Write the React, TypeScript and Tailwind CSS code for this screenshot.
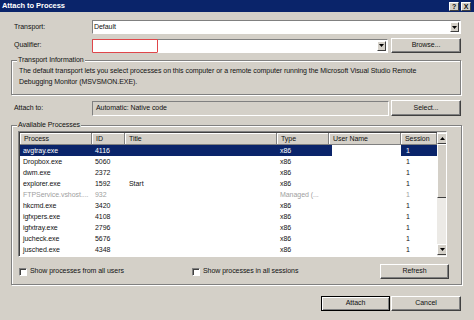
import React from 'react';

const FONT = "font-['Liberation_Sans',Arial,sans-serif]";

type Row = {
  name: string;
  id: string;
  title?: string;
  type: string;
  session: string;
  dim?: boolean;
  selected?: boolean;
};

const ROWS: Row[] = [
  { name: 'avgtray.exe', id: '4116', type: 'x86', session: '1', selected: true },
  { name: 'Dropbox.exe', id: '5060', type: 'x86', session: '1' },
  { name: 'dwm.exe', id: '2372', type: 'x86', session: '1' },
  { name: 'explorer.exe', id: '1592', title: 'Start', type: 'x86', session: '1' },
  { name: 'FTPService.vshost....', id: '932', type: 'Managed (...', session: '1', dim: true },
  { name: 'hkcmd.exe', id: '3420', type: 'x86', session: '1' },
  { name: 'igfxpers.exe', id: '4108', type: 'x86', session: '1' },
  { name: 'igfxtray.exe', id: '2796', type: 'x86', session: '1' },
  { name: 'jucheck.exe', id: '5676', type: 'x86', session: '1' },
  { name: 'jusched.exe', id: '4348', type: 'x86', session: '1' },
  { name: 'lsass.exe', id: '2072', type: 'x86', session: '1' },
];

function DropArrow() {
  return (
    <div className="w-[9px] h-[10px] mr-[1px] bg-[#d4d0c8] border border-t-white border-l-white border-r-[#404040] border-b-[#404040] flex items-center justify-center">
      <svg width="5" height="3" viewBox="0 0 5 3">
        <path d="M0 0h5L2.5 3z" fill="#000" />
      </svg>
    </div>
  );
}

function Btn({ label, w, h = 'h-[15px]', isDefault }: { label: string; w: string; h?: string; isDefault?: boolean }) {
  return (
    <div
      className={`${w} ${h} shrink-0 flex items-center justify-center bg-[#d4d0c8] border ${
        isDefault
          ? 'border-black shadow-[inset_1px_1px_0_#fff,inset_-1px_-1px_0_#808080]'
          : 'border-t-white border-l-white border-r-[#404040] border-b-[#404040] shadow-[inset_-1px_-1px_0_#808080]'
      }`}
    >
      {label}
    </div>
  );
}

function Group({ label, className, children }: { label: string; className: string; children: React.ReactNode }) {
  return (
    <div className={`relative border border-[#808080] shadow-[inset_1px_1px_0_#fff,1px_1px_0_#fff] ${className}`}>
      <span className="absolute -top-[6px] left-[5px] px-[1px] bg-[#d4d0c8] leading-[10px]">{label}</span>
      {children}
    </div>
  );
}

function Checkbox({ label }: { label: string }) {
  return (
    <div className="flex items-center gap-[3px]">
      <div className="w-[8px] h-[8px] bg-white border border-t-[#808080] border-l-[#808080] border-r-white border-b-white shadow-[inset_1px_1px_0_#404040]" />
      <span>{label}</span>
    </div>
  );
}

const COLS = ['w-[72px]', 'w-[33px]', 'w-[152px]', 'w-[52px]', 'w-[72px]', 'w-[36px]'];
const HEADS = ['Process', 'ID', 'Title', 'Type', 'User Name', 'Session'];

export default function App() {
  return (
    <div className={`w-[474px] h-[320px] overflow-hidden bg-[#d4d0c8] text-[#111] text-[7px] tracking-[-0.05px] ${FONT} flex flex-col`}>
      {/* title bar */}
      <div className="h-[12px] shrink-0 bg-[#0a246a] flex items-center justify-between pl-[2px] pr-[3px]">
        <span className="text-white font-bold text-[7.5px] leading-[12px]">Attach to Process</span>
        <div className="flex gap-[2px]">
          <div className="w-[10px] h-[9px] bg-[#d4d0c8] border border-t-white border-l-white border-r-[#404040] border-b-[#404040] flex items-center justify-center font-bold text-[7px] leading-none">?</div>
          <div className="w-[10px] h-[9px] bg-[#d4d0c8] border border-t-white border-l-white border-r-[#404040] border-b-[#404040] flex items-center justify-center font-bold text-[7px] leading-none">X</div>
        </div>
      </div>

      <div className="flex flex-col pl-[11px] pr-[12px] pt-[8px]">
        {/* Transport */}
        <div className="h-[14px] flex items-center">
          <span className="w-[81px] pl-[3px] shrink-0">Transport:</span>
          <div className="flex-1 mr-[1px] h-[14px] bg-white border border-t-[#808080] border-l-[#808080] border-r-white border-b-white flex items-center justify-between pl-[1px]">
            <span>Default</span>
            <DropArrow />
          </div>
        </div>

        {/* Qualifier */}
        <div className="h-[15px] mt-[4px] flex items-center">
          <span className="w-[81px] pl-[3px] shrink-0">Qualifier:</span>
          <div className="relative w-[296px] h-[14px] bg-white border border-t-[#808080] border-l-[#808080] border-r-white border-b-white flex items-center justify-end">
            <div className="absolute -left-[1px] -top-[1px] w-[66px] h-[14px] border border-[#e0464a] rounded-[1px]" />
            <DropArrow />
          </div>
          <div className="ml-[3px]">
            <Btn label="Browse..." w="w-[70px]" />
          </div>
        </div>

        {/* Transport information */}
        <Group label="Transport Information" className="mt-[7px] mr-[1px] h-[35px] pl-[7px] pt-[4px] leading-[11px]">
          <p>The default transport lets you select processes on this computer or a remote computer running the Microsoft Visual Studio Remote</p>
          <p>Debugging Monitor (MSVSMON.EXE).</p>
        </Group>

        {/* Attach to */}
        <div className="h-[16px] mt-[5px] flex items-center">
          <span className="w-[81px] pl-[3px] shrink-0">Attach to:</span>
          <div className="w-[297px] h-[15px] border border-t-[#808080] border-l-[#808080] border-r-white border-b-white flex items-center pl-[3px]">
            Automatic: Native code
          </div>
          <div className="ml-[2px]">
            <Btn label="Select..." w="w-[70px]" h="h-[16px]" />
          </div>
        </div>

        {/* Available processes */}
        <Group label="Available Processes" className="mt-[9px] h-[160px] pt-[5px] pl-[6px] pr-[14px] flex flex-col">
          <div className="h-[126px] shrink-0 flex bg-white border border-t-[#808080] border-l-[#808080] border-r-white border-b-white shadow-[inset_1px_1px_0_#404040] overflow-hidden">
            <div className="flex-1 flex flex-col pl-[1px] pt-[1px]">
              <div className="h-[12px] shrink-0 flex">
                {HEADS.map((h, i) => (
                  <div
                    key={h}
                    className={`${COLS[i]} shrink-0 h-[12px] leading-[11px] pl-[4px] bg-[#d4d0c8] border-r border-b border-r-[#808080] border-b-[#808080] shadow-[inset_1px_1px_0_#fff]`}
                  >
                    {h}
                  </div>
                ))}
              </div>
              {ROWS.map((r) => {
                const sel = r.selected ? 'bg-[#0a246a] text-white' : '';
                const txt = r.dim ? 'text-[#a0a0a0]' : '';
                return (
                  <div key={r.name} className={`h-[11px] shrink-0 flex leading-[11px] ${txt}`}>
                    <div className={`${COLS[0]} shrink-0 pl-[3px] truncate ${sel}`}>{r.name}</div>
                    <div className={`${COLS[1]} shrink-0 pl-[3px] ${sel}`}>{r.id}</div>
                    <div className={`${COLS[2]} shrink-0 pl-[4px] ${sel}`}>{r.title ?? ''}</div>
                    <div className={`${COLS[3]} shrink-0 pl-[3px] ${sel} ${r.selected ? 'w-[55px] mr-[-3px]' : ''}`}>{r.type}</div>
                    <div className={`${COLS[4]} shrink-0`} />
                    <div className={`${COLS[5]} shrink-0 pl-[5px] ${sel}`}>{r.session}</div>
                  </div>
                );
              })}
            </div>
            {/* scrollbar */}
            <div className="w-[10px] shrink-0 flex flex-col bg-[#eceae6] pt-[1px] pb-[1px]">
              <div className="h-[11px] shrink-0 bg-[#d4d0c8] border border-t-white border-l-white border-r-[#404040] border-b-[#404040] flex items-center justify-center">
                <svg width="5" height="3" viewBox="0 0 5 3">
                  <path d="M0 3h5L2.5 0z" fill="#000" />
                </svg>
              </div>
              <div className="h-[54px] shrink-0 bg-[#d4d0c8] border border-t-white border-l-white border-r-[#404040] border-b-[#404040]" />
              <div className="flex-1" />
              <div className="h-[11px] shrink-0 bg-[#d4d0c8] border border-t-white border-l-white border-r-[#404040] border-b-[#404040] flex items-center justify-center">
                <svg width="5" height="3" viewBox="0 0 5 3">
                  <path d="M0 0h5L2.5 3z" fill="#000" />
                </svg>
              </div>
            </div>
          </div>

          <div className="h-[15px] mt-[7px] flex items-center pl-[1px] mr-[-2px]">
            <div className="w-[173px] shrink-0">
              <Checkbox label="Show processes from all users" />
            </div>
            <Checkbox label="Show processes in all sessions" />
            <div className="ml-auto">
              <Btn label="Refresh" w="w-[69px]" />
            </div>
          </div>
        </Group>

        {/* bottom buttons */}
        <div className="mt-[11px] mr-[1px] flex justify-end gap-[1px]">
          <Btn label="Attach" w="w-[69px]" isDefault />
          <Btn label="Cancel" w="w-[70px]" />
        </div>
      </div>
    </div>
  );
}
